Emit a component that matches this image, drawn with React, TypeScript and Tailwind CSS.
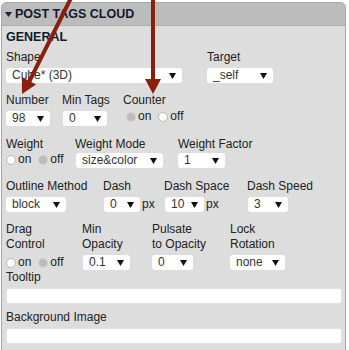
import React from 'react';

const font = { fontFamily: '"Liberation Sans", Arial, sans-serif' };

const Caret: React.FC = () => (
    <svg width="7" height="6" viewBox="0 0 7 6" className="shrink-0">
        <polygon points="0,0 7,0 3.5,6" fill="#111" />
    </svg>
);

const Label: React.FC<{ children: React.ReactNode }> = ({ children }) => (
    <div className="text-[12px] leading-[15px] text-[#222]">{children}</div>
);

const Select: React.FC<{ value: string; w: string; className?: string }> = ({ value, w, className }) => (
    <div className={`${w} ${className ?? ''} h-[15px] bg-white rounded-[3px] flex items-center justify-between pl-[6px] pr-[6px] text-[12px] leading-[15px] text-[#333]`}>
        <span>{value}</span>
        <Caret />
    </div>
);

const Radio: React.FC<{ checked?: boolean }> = ({ checked }) => (
    <span className={`block shrink-0 w-[10px] h-[10px] rounded-full border ${checked ? 'bg-[#bdbdbd] border-[#d2d2d2]' : 'bg-white border-[#b8b8b8]'}`} />
);

const OnOff: React.FC<{ on?: boolean; className?: string }> = ({ on, className }) => (
    <div className={`flex items-center text-[12px] leading-[15px] text-[#222] ${className ?? ''}`}>
        <Radio checked={on} />
        <span className="ml-[2px]">on</span>
        <span className="ml-[7px]"><Radio checked={!on} /></span>
        <span className="ml-[2px]">off</span>
    </div>
);

const Arrows: React.FC = () => (
    <svg className="absolute left-0 top-0 pointer-events-none" width="349" height="350">
        <line x1="71" y1="-2" x2="29" y2="82" stroke="#8a1f0e" strokeWidth="4" />
        <polygon points="22,94 36,84.4 21.8,77" fill="#8a1f0e" />
        <line x1="153" y1="-2" x2="153" y2="81" stroke="#8a1f0e" strokeWidth="4" />
        <polygon points="153,94 145,79 161,79" fill="#8a1f0e" />
    </svg>
);

const App: React.FC = () => {
    return (
        <div className="relative w-[349px] h-[350px] overflow-hidden bg-white" style={font}>
            <div className="ml-[1px] mt-[2px] w-[345px] h-[360px] border border-[#a9a9a9] rounded-t-[5px] bg-[#dddddd] overflow-hidden">
                {/* header */}
                <div className="h-[23px] bg-[#bcbcbc] border-b border-[#adadad] flex items-center pl-[3px]">
                    <svg width="7" height="5" viewBox="0 0 7 5">
                        <polygon points="0,0 7,0 3.5,5" fill="#1a2233" />
                    </svg>
                    <span className="ml-[3px] text-[12.5px] leading-[15px] font-bold text-[#101a2e]">POST TAGS CLOUD</span>
                </div>

                <div className="pl-[4px] pt-[4px]">
                    <div className="text-[12.5px] leading-[15px] font-bold text-[#101a2e]">GENERAL</div>

                    {/* shape / target */}
                    <div className="flex mt-[5px]">
                        <div className="w-[201px]">
                            <Label>Shape</Label>
                            <Select value="Cube* (3D)" w="w-[176px]" className="mt-[3px]" />
                        </div>
                        <div>
                            <Label>Target</Label>
                            <Select value="_self" w="w-[66px]" className="mt-[3px]" />
                        </div>
                    </div>

                    {/* number / min tags / counter */}
                    <div className="flex mt-[10px]">
                        <div className="w-[56px]">
                            <Label>Number</Label>
                            <Select value="98" w="w-[44px]" className="mt-[3px]" />
                        </div>
                        <div className="w-[61px]">
                            <Label>Min Tags</Label>
                            <Select value="0" w="w-[44px]" className="mt-[3px] ml-[1px]" />
                        </div>
                        <div>
                            <Label>Counter</Label>
                            <OnOff on className="mt-[1px] ml-[3px]" />
                        </div>
                    </div>

                    {/* weight */}
                    <div className="flex mt-[11px]">
                        <div className="w-[69px]">
                            <Label>Weight</Label>
                            <OnOff />
                        </div>
                        <div className="w-[103px]">
                            <Label>Weight Mode</Label>
                            <Select value="size&color" w="w-[87px]" className="mt-[1px] ml-[1px]" />
                        </div>
                        <div>
                            <Label>Weight Factor</Label>
                            <Select value="1" w="w-[47px]" className="mt-[1px]" />
                        </div>
                    </div>

                    {/* outline / dash */}
                    <div className="flex mt-[11px]">
                        <div className="w-[97px]">
                            <Label>Outline Method</Label>
                            <Select value="block" w="w-[60px]" className="mt-[3px]" />
                        </div>
                        <div className="w-[61px]">
                            <Label>Dash</Label>
                            <div className="flex items-center mt-[3px]">
                                <Select value="0" w="w-[36px]" className="ml-[1px]" />
                                <span className="ml-[2px] text-[12px] leading-[15px] text-[#222]">px</span>
                            </div>
                        </div>
                        <div className="w-[83px]">
                            <Label>Dash Space</Label>
                            <div className="flex items-center mt-[3px]">
                                <Select value="10" w="w-[39px]" className="ml-[1px]" />
                                <span className="ml-[2px] text-[12px] leading-[15px] text-[#222]">px</span>
                            </div>
                        </div>
                        <div>
                            <Label>Dash Speed</Label>
                            <Select value="3" w="w-[40px]" className="mt-[3px] ml-[1px]" />
                        </div>
                    </div>

                    {/* drag / opacity / rotation */}
                    <div className="flex mt-[10px]">
                        <div className="w-[76px]">
                            <Label>Drag<br />Control</Label>
                            <OnOff className="mt-[3px]" />
                        </div>
                        <div className="w-[70px]">
                            <Label>Min<br />Opacity</Label>
                            <Select value="0.1" w="w-[47px]" className="mt-[3px] ml-[1px]" />
                        </div>
                        <div className="w-[78px]">
                            <Label>Pulsate<br />to Opacity</Label>
                            <Select value="0" w="w-[41px]" className="mt-[3px]" />
                        </div>
                        <div>
                            <Label>Lock<br />Rotation</Label>
                            <Select value="none" w="w-[55px]" className="mt-[3px]" />
                        </div>
                    </div>

                    <Label>Tooltip</Label>
                    <div className="mt-[3px] w-[336px] h-[16px] bg-white rounded-[3px] border border-[#e4e4e4]" />

                    <div className="mt-[6px]">
                        <Label>Background Image</Label>
                    </div>
                    <div className="mt-[3px] w-[336px] h-[16px] bg-white rounded-[3px] border border-[#e4e4e4]" />
                </div>
            </div>
            <Arrows />
        </div>
    );
};

export default App;
